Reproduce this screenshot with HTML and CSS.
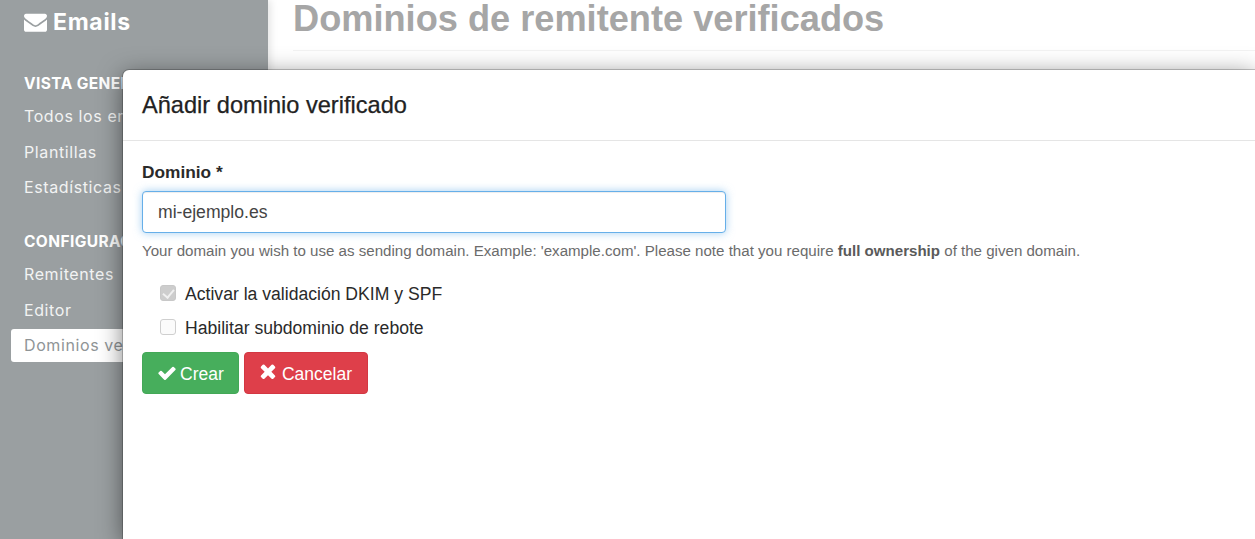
FILE: index.html
```html
<!DOCTYPE html>
<html lang="es">
<head>
    <meta charset="UTF-8">
    <meta name="viewport" content="width=device-width, initial-scale=1.0">
    <title>Dominios de remitente verificados</title>
    <link rel="stylesheet" href="styles.css">
</head>
<body>
    <div class="layout">
        <aside class="sidebar">
            <div class="brand">
                <svg class="brand-icon" viewBox="0 128 1792 1536"><path d="M1792 710v794q0 66-47 113t-113 47h-1472q-66 0-113-47t-47-113v-794q44 49 101 87 362 246 497 345 57 42 92.500 65.500t94.500 48 110 24.500h2q51 0 110-24.500t94.500-48 92.500-65.500q170-123 498-345 57-39 100-87zm0-294q0 79-49 151t-122 123q-376 261-468 325-10 7-42.500 30.500t-54 38-52 32.500-57.500 27-50 9h-2q-23 0-50-9t-57.500-27-52-32.500-54-38-42.500-30.500q-91-64-262-182.500t-205-142.500q-62-42-117-115.500t-55-136.500q0-78 41.500-130t118.500-52h1472q65 0 112.500 47t47.500 113z"/></svg>
                <span>Emails</span>
            </div>
            <h3 class="nav-title">VISTA GENERAL</h3>
            <a class="nav-link">Todos los emails</a>
            <a class="nav-link">Plantillas</a>
            <a class="nav-link">Estadísticas</a>
            <h3 class="nav-title nav-title-second">CONFIGURACIÓN</h3>
            <a class="nav-link">Remitentes</a>
            <a class="nav-link">Editor</a>
            <a class="nav-link active">Dominios verificados</a>
        </aside>
        <main class="content">
            <h1>Dominios de remitente verificados</h1>
            <hr>
        </main>
    </div>

    <div class="modal">
        <div class="modal-header">
            <h4>Añadir dominio verificado</h4>
        </div>
        <form class="modal-body">
            <label class="field-label" for="domain">Dominio *</label>
            <input class="field-input" id="domain" type="text" value="mi-ejemplo.es">
            <p class="help">Your domain you wish to use as sending domain. Example: 'example.com'. Please note that you require <b>full ownership</b> of the given domain.</p>
            <label class="check"><input type="checkbox" checked disabled> Activar la validación DKIM y SPF</label>
            <label class="check"><input type="checkbox"> Habilitar subdominio de rebote</label>
            <div class="actions">
                <button type="button" class="btn btn-success">
                    <svg class="btn-icon" viewBox="0 0 1792 1792"><path d="M1671 566q0 40-28 68l-724 724-136 136q-28 28-68 28t-68-28l-136-136-362-362q-28-28-28-68t28-68l136-136q28-28 68-28t68 28l294 295 656-657q28-28 68-28t68 28l136 136q28 28 28 68z"/></svg>
                    Crear
                </button>
                <button type="button" class="btn btn-danger">
                    <svg class="btn-icon" viewBox="0 0 1792 1792"><path d="M1490 1322q0 40-28 68l-136 136q-28 28-68 28t-68-28l-294-294-294 294q-28 28-68 28t-68-28l-136-136q-28-28-28-68t28-68l294-294-294-294q-28-28-28-68t28-68l136-136q28-28 68-28t68 28l294 294 294-294q28-28 68-28t68 28l136 136q28 28 28 68t-28 68l-294 294 294 294q28 28 28 68z"/></svg>
                    Cancelar
                </button>
            </div>
        </form>
    </div>
</body>
</html>
```

FILE: styles.css
```css
* {
    box-sizing: border-box;
}
html, body {
    height: 100%;
}
body {
    margin: 0;
    overflow: hidden;
    background: #fff;
    font-family: "Liberation Sans", Arial, sans-serif;
    color: #333;
}
.layout {
    display: flex;
    height: 539px;
    overflow: hidden;
}

/* Sidebar */
.sidebar {
    width: 268px;
    flex-shrink: 0;
    padding: 7px 0 0 11px;
    background: #9a9fa1;
    box-shadow: 2px 0 8px rgba(0, 0, 0, 0.12);
    color: #fff;
    font-family: "Inter", "Open Sans", sans-serif;
    white-space: nowrap;
}
.brand {
    display: flex;
    align-items: center;
    gap: 6px;
    height: 30px;
    padding-left: 13px;
    font-size: 23px;
    font-weight: 700;
    letter-spacing: 0.7px;
}
.brand-icon {
    width: 23px;
    height: 20px;
    fill: #fff;
}
.nav-title {
    margin: 37px 0 6px;
    padding-left: 13px;
    height: 20px;
    line-height: 20px;
    font-size: 15.5px;
    font-weight: 700;
    letter-spacing: 0.4px;
}
.nav-title-second {
    margin-top: 28px;
}
.nav-link {
    display: block;
    height: 33px;
    margin-bottom: 2.5px;
    padding-left: 13px;
    border-radius: 3px;
    line-height: 33px;
    font-size: 16px;
    letter-spacing: 0.6px;
    color: #f2f3f3;
}
.nav-link.active {
    background: #fff;
    color: #8f9496;
}

/* Page behind the dialog */
.content {
    flex: 1;
    padding: 0 0 0 25px;
    overflow: hidden;
}
.content h1 {
    margin: 0;
    font-size: 36.2px;
    line-height: 37px;
    font-weight: 700;
    color: #a6a6a6;
    white-space: nowrap;
}
.content hr {
    margin: 13px 0 0;
    border: 0;
    border-top: 1px solid #f3f3f3;
}

/* Dialog */
.modal {
    position: absolute;
    left: 123px;
    top: 70px;
    right: 0;
    bottom: 0;
    background: #fff;
    border-radius: 6px 0 0 0;
    box-shadow: 0 0 0 1px rgba(0, 0, 0, 0.2), 0 5px 24px rgba(0, 0, 0, 0.5);
}
.modal-header {
    height: 71px;
    padding: 0 19px;
    display: flex;
    align-items: center;
    border-bottom: 1px solid #e5e5e5;
}
.modal-header h4 {
    margin: 0;
    font-size: 23.6px;
    font-weight: 400;
    color: #222;
    -webkit-text-stroke: 0.25px #222;
}
.modal-body {
    padding: 20px 19px 0;
    width: 1000px;
}
.field-label {
    display: block;
    font-size: 17.3px;
    line-height: 22px;
    font-weight: 700;
    color: #2a2a2a;
}
.field-input {
    display: block;
    width: 584px;
    height: 42px;
    margin-top: 8px;
    padding: 0 15px;
    border: 1px solid #66afe9;
    border-radius: 4px;
    outline: none;
    box-shadow: inset 0 1px 1px rgba(0, 0, 0, 0.075), 0 0 8px rgba(102, 175, 233, 0.6);
    font: 17.6px "Liberation Sans", Arial, sans-serif;
    color: #444;
}
.help {
    margin: 8px 0 0;
    font-size: 15.1px;
    line-height: 20px;
    color: #6b6b6b;
    white-space: nowrap;
}
.help b {
    color: #5a5a5a;
}
.check {
    display: flex;
    align-items: center;
    height: 24px;
    margin: 0 0 10px 18px;
    font-size: 17.6px;
    color: #2a2a2a;
}
.help + .check {
    margin-top: 21px;
}
.check input {
    appearance: none;
    position: relative;
    width: 16px;
    height: 16px;
    margin: 0 9px 3px 0;
    border: 1px solid #cfcfcf;
    border-radius: 3px;
    background: #fbfbfb;
}
.check input:checked {
    background: #cdcdcd;
    border-color: #c8c8c8;
}
.check input:checked::after {
    content: "";
    position: absolute;
    left: 4px;
    top: 1px;
    width: 5px;
    height: 9px;
    border: solid #f0f0f0;
    border-width: 0 2px 2px 0;
    transform: rotate(40deg);
}
.actions {
    display: flex;
    gap: 5px;
    margin-top: 12px;
}
.btn {
    display: flex;
    align-items: center;
    justify-content: center;
    gap: 3px;
    height: 42px;
    border: 1px solid;
    border-radius: 4px;
    padding: 3px 0 0;
    font: 17.5px "Liberation Sans", Arial, sans-serif;
    color: #fff;
}
.btn-success {
    width: 97px;
    background: #47ae5c;
    border-color: #43a857;
}
.btn-danger {
    width: 124px;
    padding-right: 3px;
    background: #de3f4a;
    border-color: #d33742;
}
.btn-icon {
    width: 20px;
    height: 20px;
    margin-bottom: 3px;
    fill: #fff;
}
.btn-danger .btn-icon {
    width: 22px;
    height: 22px;
    margin-bottom: 7px;
}
```
